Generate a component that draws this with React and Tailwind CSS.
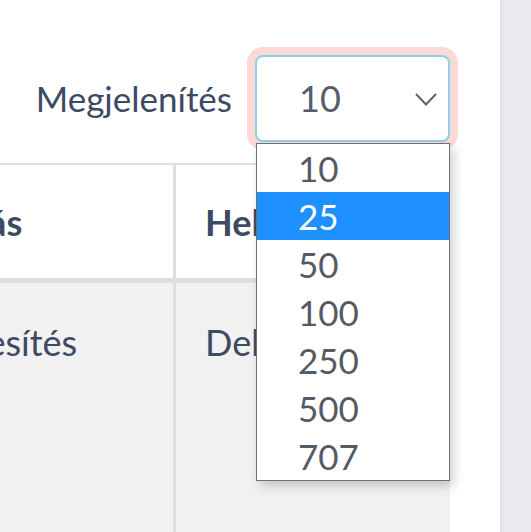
import React from "react";

const options = ["10", "25", "50", "100", "250", "500", "707"];

export default function App() {
  return (
    <div className="flex h-[532px] w-[531px] overflow-hidden bg-white font-['Lato',sans-serif] text-[#3d4a63]">
      {/* main panel */}
      <main className="w-[500px] shrink-0 bg-white pr-[50px]">
        {/* page size row */}
        <div className="flex items-center justify-end pt-[55px] pb-[21px]">
          <span className="mr-[23px] text-[35px] leading-[1.5]">Megjelenítés</span>
          <div className="relative h-[87px] w-[195px] rounded-[8px] border-2 border-[#8dd0ea] bg-white ring-8 ring-[#fdd9d6]">
            <div className="pl-[42px] text-[36px] leading-[83px] text-[#555e6a]">10</div>
            <svg
              className="absolute right-[11px] top-[36px]"
              width="22"
              height="13"
              viewBox="0 0 22 13"
              fill="none"
              stroke="#5b6470"
              strokeWidth="2"
            >
              <polyline points="1,1 11,11.5 21,1" />
            </svg>

            {/* open list */}
            <ul className="absolute left-[-1px] top-[86px] z-10 w-[194px] border border-[#707070] bg-white shadow-[4px_5px_10px_rgba(0,0,0,0.18)]">
              {options.map((o) => (
                <li
                  key={o}
                  className={
                    o === "25"
                      ? "h-[48px] bg-[#1e90ff] pl-[41px] text-[35px] leading-[48px] text-white"
                      : "h-[48px] pl-[41px] text-[35px] leading-[48px] text-[#555b65]"
                  }
                >
                  {o}
                </li>
              ))}
            </ul>
          </div>
        </div>

        {/* table */}
        <div className="w-[450px] overflow-hidden border-t-2 border-[#dee0e3]">
          <div className="ml-[-127px] grid grid-cols-[300px_277px]">
            <div className="flex h-[118px] items-center border-b-[5px] border-[#dcdee2] pl-[6px] text-[36px] font-bold leading-[1.5]">
              Beosztás
            </div>
            <div className="flex h-[118px] items-center border-b-[5px] border-l-[3px] border-[#dcdee2] pl-[29px] text-[36px] font-bold leading-[1.5]">
              Helyszín
            </div>
            <div className="h-[260px] bg-[#f1f1f1] pl-[31px] pt-[32px] text-[36px] leading-[1.5]">
              Értékesítés
            </div>
            <div className="h-[260px] border-l-[3px] border-[#dcdee2] bg-[#f1f1f1] pl-[29px] pt-[32px] text-[36px] leading-[1.5]">
              Debrecen
            </div>
          </div>
        </div>
      </main>

      {/* side strip */}
      <aside className="flex-1 border-l border-[#dfe1e5] bg-[#e9ebee] shadow-[inset_3px_0_4px_-2px_rgba(0,0,0,0.06)]" />
    </div>
  );
}
